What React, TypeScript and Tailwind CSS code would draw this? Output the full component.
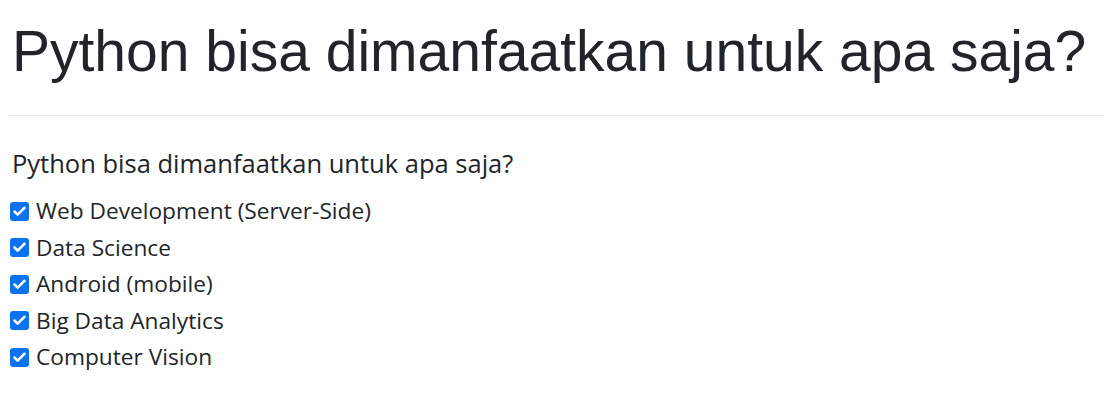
import { Check } from "lucide-react";

const options = [
  "Web Development (Server-Side)",
  "Data Science",
  "Android (mobile)",
  "Big Data Analytics",
  "Computer Vision",
];

const CheckBox = () => (
  <span className="flex h-[19px] w-[19px] shrink-0 items-center justify-center rounded-[3px] bg-[#0b72f0]">
    <Check size={15} strokeWidth={4} className="text-white" />
  </span>
);

export default function App() {
  return (
    <div className="min-h-[410px] w-[1104px] bg-white pl-[10px] text-[#212529]">
      <h1 className="pt-[17px] pl-[2px] whitespace-nowrap font-['Liberation_Sans',Arial,sans-serif] text-[57px] leading-[68px]">
        Python bisa dimanfaatkan untuk apa saja?
      </h1>
      <hr className="mt-[30px] border-t border-[#e6e6e6]" />
      <p className="mt-[30px] pl-[2px] font-['Open_Sans',sans-serif] text-[25.5px] leading-[34px]">
        Python bisa dimanfaatkan untuk apa saja?
      </p>
      <ul className="mt-[13px] flex flex-col font-['Open_Sans',sans-serif] text-[22.7px] leading-[36.5px]">
        {options.map((opt) => (
          <li key={opt} className="flex items-center gap-[7px]">
            <CheckBox />
            <span>{opt}</span>
          </li>
        ))}
      </ul>
    </div>
  );
}
